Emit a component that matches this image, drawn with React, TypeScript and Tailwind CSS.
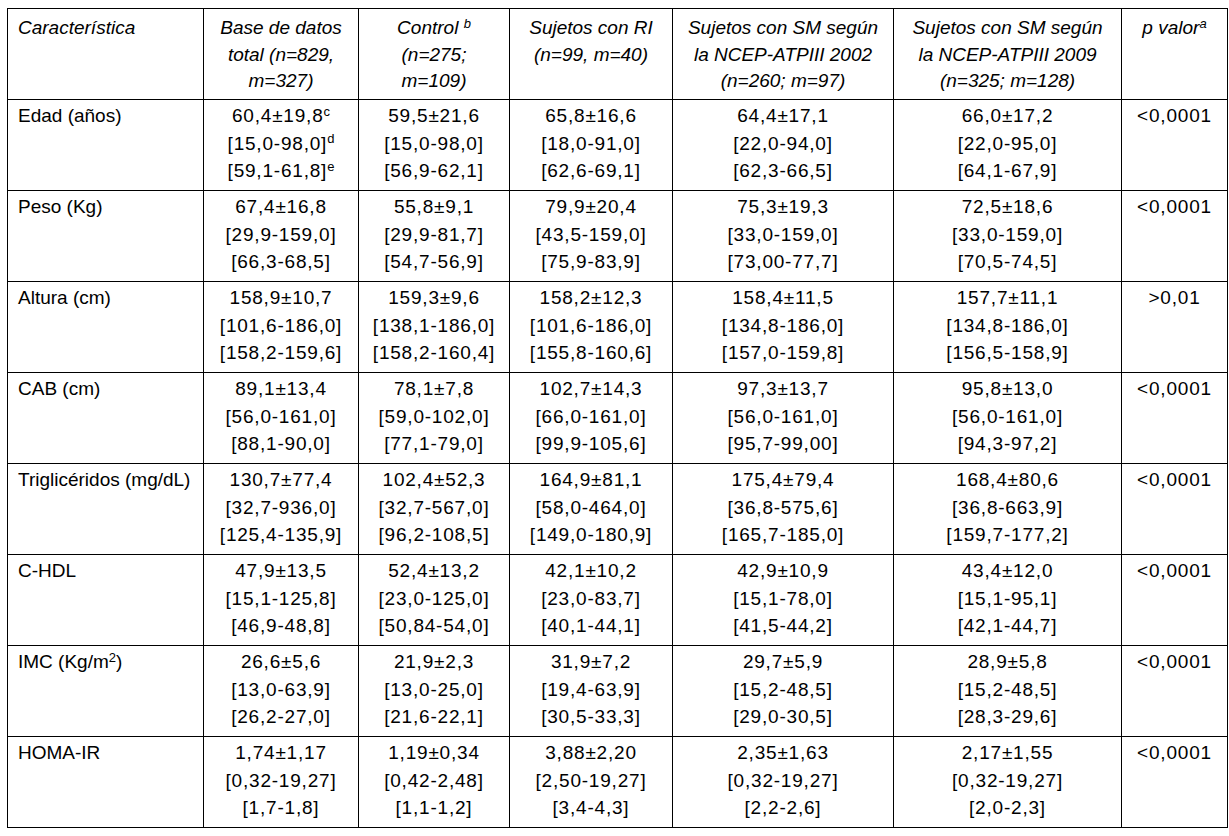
import React from "react";

type Row = {
  label: React.ReactNode;
  cols: React.ReactNode[][];
  p: string;
};

const S = ({ children }: { children: React.ReactNode }) => (
  <sup className="text-[13px] tracking-normal">{children}</sup>
);

const rows: Row[] = [
  {
    label: "Edad (años)",
    cols: [
      [
        <>60,4±19,8<S>c</S></>,
        <>[15,0-98,0]<S>d</S></>,
        <>[59,1-61,8]<S>e</S></>,
      ],
      ["59,5±21,6", "[15,0-98,0]", "[56,9-62,1]"],
      ["65,8±16,6", "[18,0-91,0]", "[62,6-69,1]"],
      ["64,4±17,1", "[22,0-94,0]", "[62,3-66,5]"],
      ["66,0±17,2", "[22,0-95,0]", "[64,1-67,9]"],
    ],
    p: "<0,0001",
  },
  {
    label: "Peso (Kg)",
    cols: [
      ["67,4±16,8", "[29,9-159,0]", "[66,3-68,5]"],
      ["55,8±9,1", "[29,9-81,7]", "[54,7-56,9]"],
      ["79,9±20,4", "[43,5-159,0]", "[75,9-83,9]"],
      ["75,3±19,3", "[33,0-159,0]", "[73,00-77,7]"],
      ["72,5±18,6", "[33,0-159,0]", "[70,5-74,5]"],
    ],
    p: "<0,0001",
  },
  {
    label: "Altura (cm)",
    cols: [
      ["158,9±10,7", "[101,6-186,0]", "[158,2-159,6]"],
      ["159,3±9,6", "[138,1-186,0]", "[158,2-160,4]"],
      ["158,2±12,3", "[101,6-186,0]", "[155,8-160,6]"],
      ["158,4±11,5", "[134,8-186,0]", "[157,0-159,8]"],
      ["157,7±11,1", "[134,8-186,0]", "[156,5-158,9]"],
    ],
    p: ">0,01",
  },
  {
    label: "CAB (cm)",
    cols: [
      ["89,1±13,4", "[56,0-161,0]", "[88,1-90,0]"],
      ["78,1±7,8", "[59,0-102,0]", "[77,1-79,0]"],
      ["102,7±14,3", "[66,0-161,0]", "[99,9-105,6]"],
      ["97,3±13,7", "[56,0-161,0]", "[95,7-99,00]"],
      ["95,8±13,0", "[56,0-161,0]", "[94,3-97,2]"],
    ],
    p: "<0,0001",
  },
  {
    label: "Triglicéridos (mg/dL)",
    cols: [
      ["130,7±77,4", "[32,7-936,0]", "[125,4-135,9]"],
      ["102,4±52,3", "[32,7-567,0]", "[96,2-108,5]"],
      ["164,9±81,1", "[58,0-464,0]", "[149,0-180,9]"],
      ["175,4±79,4", "[36,8-575,6]", "[165,7-185,0]"],
      ["168,4±80,6", "[36,8-663,9]", "[159,7-177,2]"],
    ],
    p: "<0,0001",
  },
  {
    label: "C-HDL",
    cols: [
      ["47,9±13,5", "[15,1-125,8]", "[46,9-48,8]"],
      ["52,4±13,2", "[23,0-125,0]", "[50,84-54,0]"],
      ["42,1±10,2", "[23,0-83,7]", "[40,1-44,1]"],
      ["42,9±10,9", "[15,1-78,0]", "[41,5-44,2]"],
      ["43,4±12,0", "[15,1-95,1]", "[42,1-44,7]"],
    ],
    p: "<0,0001",
  },
  {
    label: (
      <>
        IMC (Kg/m<S>2</S>)
      </>
    ),
    cols: [
      ["26,6±5,6", "[13,0-63,9]", "[26,2-27,0]"],
      ["21,9±2,3", "[13,0-25,0]", "[21,6-22,1]"],
      ["31,9±7,2", "[19,4-63,9]", "[30,5-33,3]"],
      ["29,7±5,9", "[15,2-48,5]", "[29,0-30,5]"],
      ["28,9±5,8", "[15,2-48,5]", "[28,3-29,6]"],
    ],
    p: "<0,0001",
  },
  {
    label: "HOMA-IR",
    cols: [
      ["1,74±1,17", "[0,32-19,27]", "[1,7-1,8]"],
      ["1,19±0,34", "[0,42-2,48]", "[1,1-1,2]"],
      ["3,88±2,20", "[2,50-19,27]", "[3,4-4,3]"],
      ["2,35±1,63", "[0,32-19,27]", "[2,2-2,6]"],
      ["2,17±1,55", "[0,32-19,27]", "[2,0-2,3]"],
    ],
    p: "<0,0001",
  },
];

const headers: React.ReactNode[][] = [
  ["Base de datos", "total (n=829,", "m=327)"],
  [
    <>
      Control <S>b</S>
    </>,
    "(n=275;",
    "m=109)",
  ],
  ["Sujetos con RI", "(n=99, m=40)"],
  ["Sujetos con SM según", "la NCEP-ATPIII 2002", "(n=260; m=97)"],
  ["Sujetos con SM según", "la NCEP-ATPIII 2009", "(n=325; m=128)"],
  [
    <>
      p valor<S>a</S>
    </>,
  ],
];

export default function App() {
  return (
    <div
      className="min-h-[836px] w-[1229px] bg-white text-black pl-[7px] pt-[8px]"
      style={{ fontFamily: '"Liberation Sans", Arial, sans-serif' }}
    >
      <div className="grid w-[1221px] grid-cols-[195px_154px_150px_162px_220px_227px_105px] auto-rows-[90px] gap-px bg-black p-px">
        <div className="bg-white pl-[10px] pt-[6px] text-[19px] italic leading-[26.5px]">
          Característica
        </div>
        {headers.map((h, i) => (
          <div
            key={i}
            className="flex flex-col items-center bg-white pt-[6px] text-center text-[19px] italic leading-[26.5px]"
          >
            {h.map((line, j) => (
              <div key={j} className="whitespace-nowrap">
                {line}
              </div>
            ))}
          </div>
        ))}
        {rows.map((r, i) => (
          <React.Fragment key={i}>
            <div className="whitespace-nowrap bg-white pl-[10px] pt-[2px] text-[19px] leading-[27.5px]">
              {r.label}
            </div>
            {r.cols.map((c, j) => (
              <div
                key={j}
                className="flex flex-col items-center bg-white pt-[2px] text-center text-[19px] leading-[27.5px] tracking-[0.8px]"
              >
                {c.map((line, k) => (
                  <div key={k} className="whitespace-nowrap">
                    {line}
                  </div>
                ))}
              </div>
            ))}
            <div className="flex flex-col items-center bg-white pt-[2px] text-center text-[19px] leading-[27.5px] tracking-[0.8px]">
              <div className="whitespace-nowrap">{r.p}</div>
            </div>
          </React.Fragment>
        ))}
      </div>
    </div>
  );
}
